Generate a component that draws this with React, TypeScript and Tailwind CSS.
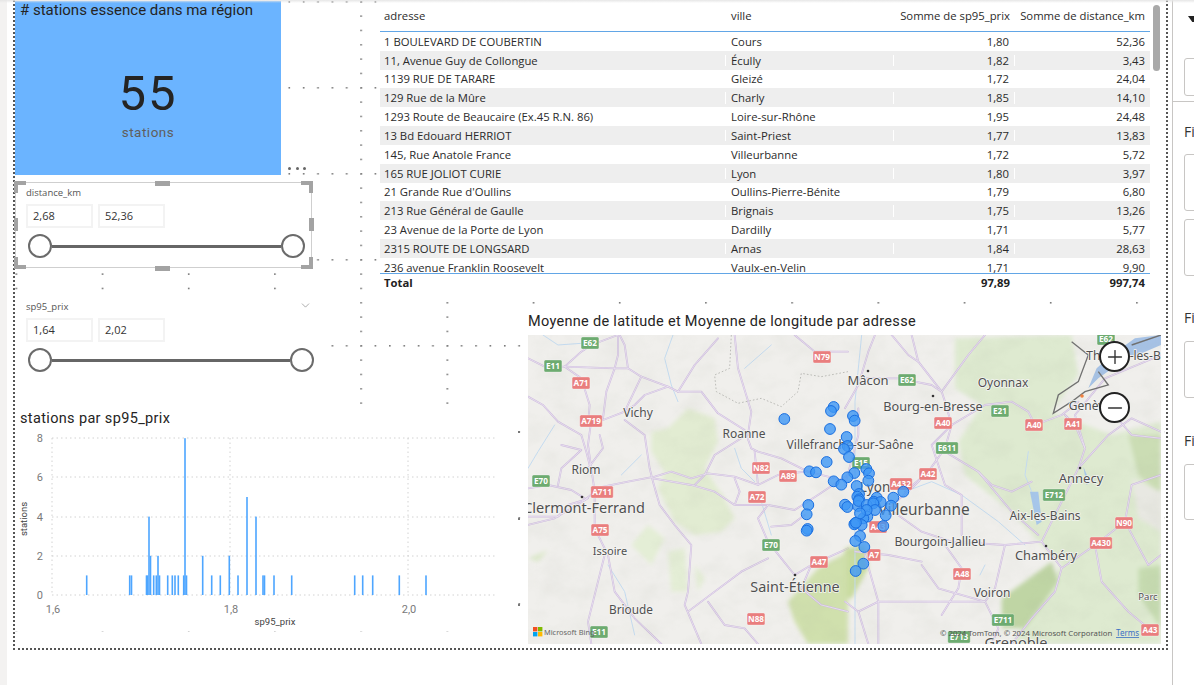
import { Plus, Minus, ChevronDown } from 'lucide-react';

const rows = [
  ['1 BOULEVARD DE COUBERTIN', 'Cours', '1,80', '52,36'],
  ['11, Avenue Guy de Collongue', 'Écully', '1,82', '3,43'],
  ['1139 RUE DE TARARE', 'Gleizé', '1,72', '24,04'],
  ['129 Rue de la Mûre', 'Charly', '1,85', '14,10'],
  ['1293 Route de Beaucaire (Ex.45 R.N. 86)', 'Loire-sur-Rhône', '1,95', '24,48'],
  ['13 Bd Edouard HERRIOT', 'Saint-Priest', '1,77', '13,83'],
  ['145, Rue Anatole France', 'Villeurbanne', '1,72', '5,72'],
  ['165 RUE JOLIOT CURIE', 'Lyon', '1,80', '3,97'],
  ["21 Grande Rue d'Oullins", 'Oullins-Pierre-Bénite', '1,79', '6,80'],
  ['213 Rue Général de Gaulle', 'Brignais', '1,75', '13,26'],
  ['23 Avenue de la Porte de Lyon', 'Dardilly', '1,71', '5,77'],
  ['2315 ROUTE DE LONGSARD', 'Arnas', '1,84', '28,63'],
  ['236 avenue Franklin Roosevelt', 'Vaulx-en-Velin', '1,71', '9,90'],
];

// [x, count], x in page pixels
const bars = [
  [86.7, 1], [129.7, 1], [131.5, 1], [146.5, 1], [147.5, 1], [149, 4], [150.5, 2], [153.7, 1], [156.3, 1], [158, 2],
  [159.5, 1], [167.7, 1], [172.3, 1], [175, 1], [178.3, 1], [183.7, 1], [185, 8], [186.5, 1], [202.7, 2], [211.7, 1],
  [220.3, 1], [229.3, 2], [238, 1], [247, 5], [256, 4], [263, 1], [264.5, 1], [274, 1], [291.7, 1], [354.7, 1],
  [362.7, 1], [372.7, 1], [399.3, 1], [426, 1],
];

const dots = [
  [73, 87], [221, 51], [213, 63], [279, 78], [284, 92], [210, 117], [260, 141], [263, 168], [252, 177], [267, 201],
  [200, 216], [148, 244], [168, 247], [283, 249], [262, 262], [221, 274], [244, 284], [319, 237], [327, 250], [325, 272],
  [290, 288], [297, 312], [292, 320], [298, 328], [294, 348], [296, 333], [255, 344], [262, 351], [350, 323], [341, 335],
  [362, 336], [400, 323], [430, 305], [393, 347], [320, 345], [340, 340], [345, 360], [377, 376], [322, 380], [310, 385],
  [305, 405], [285, 400], [283, 403], [288, 398], [370, 408], [145, 345], [140, 373], [143, 417], [140, 422], [300, 438],
  [286, 453], [313, 471], [310, 521], [287, 543], [320, 360], [300, 370],
];

// map geometry: west and east halves, traced at 3x from each half's corner
const westRoads = [
  'M0 70L50 95L110 95L260 100L300 100L340 125L420 155L450 170L520 170L570 235L650 285L670 340L690 350L760 370L840 410L960 440',
  'M110 95L160 50L190 30L270 0',
  'M270 0L270 60L260 100L235 170L225 250L190 255L180 330L190 400L200 470L200 580L240 660L260 770L320 850L400 927',
  'M300 100L290 30L275 0',
  'M110 95L160 130L185 210L180 270',
  'M0 185L45 210L90 260L160 300L175 350L185 390',
  'M200 460L300 440L380 425L430 410L490 430L540 415L620 425L690 450L750 420L830 410',
  'M0 460L60 450L130 465L170 490',
  'M0 545L90 545L120 510L170 495L200 470',
  'M225 255L290 230L340 125',
  'M290 255L350 300L365 400L375 440L395 510L440 570L490 630L480 770L470 810L520 927',
  'M375 430L490 450L560 470L620 510L720 510L800 525L870 480L960 420',
  'M720 510L690 550L720 620L760 670L800 720L850 690L960 640',
  'M640 310L560 360L530 420L500 450',
  'M660 300L670 230L630 100L620 0',
  'M450 170L500 90L570 10',
  'M420 155L350 180L320 210L290 230',
  'M730 575L790 570L830 540',
  'M720 670L640 710L560 770L480 830',
  'M540 800L590 870L650 880L690 927',
  'M620 430L635 470L620 510',
  'M180 490L130 520L80 550L0 570',
  'M680 350L690 450',
  'M850 690L820 760L880 810L960 830',
  'M800 0L860 50L960 50',
  'M230 660L180 860L190 927',
  'M100 330L160 345L100 400L90 450',
  'M215 300L225 340L180 400',
];

const westRivers = [
  'M435 0L410 70L430 150L450 200',
  'M730 30L650 100',
  'M0 400L30 350L80 270',
  'M340 360L280 420',
  'M620 340L640 400L680 440',
  'M700 500L730 600',
  'M240 690L290 770L320 900',
  'M45 0L90 30L160 25',
];

const eastRoads = [
  'M0 220L40 150L70 50L90 0',
  'M0 450L40 300L40 220',
  'M200 0L220 80L290 170L300 200L320 270L300 340L250 410L180 470',
  'M60 130L160 130L260 150L290 170L370 60L420 0',
  'M320 270L420 210L500 200L550 230L570 270L650 240L700 200',
  'M300 350L400 410L440 450L500 470L560 440',
  'M130 520L230 590L320 620L480 630L590 620',
  'M590 620L620 560L700 400L720 340L690 270L660 240',
  'M700 400L790 300L860 250L948 290',
  'M590 620L650 700L630 770L560 850L500 927',
  'M480 630L450 760L420 800L100 800L40 830',
  'M300 630L350 700L340 760L290 840',
  'M230 690L280 760L420 800L460 880L440 927',
  'M60 660L100 800L100 927',
  'M650 700L750 630L840 560L860 450L948 420',
  'M840 560L910 690L948 660',
  'M750 630L770 740L850 830L910 880',
  'M320 270L260 330L300 450L350 480L350 600',
  'M400 410L500 530L580 600',
  'M30 650L130 660L230 680',
  'M720 340L690 240L780 130L948 60',
  'M948 310L860 300L800 230',
  'M130 520L200 460L250 410',
  'M140 0L190 60L220 80',
  'M0 800L40 830L70 927',
];

const eastRivers = [
  'M50 0L30 200L30 500L30 927',
  'M180 470L260 440L350 480L460 560L540 630',
  'M550 350L540 420L560 470',
  'M420 690L405 720',
];

const labels: [string, number, number, number][] = [
  ['Mâcon', 868, 385, 13], ['Oyonnax', 1003, 387, 12], ['Bourg-en-Bresse', 933, 411, 12.7], ['Thonon-les-Bains', 1135, 360, 12],
  ['Genève', 1090, 410, 12], ['Vichy', 638, 417, 12], ['Roanne', 744, 438, 12], ['Villefranche-sur-Saône', 850, 449, 12],
  ['Riom', 586, 474, 12], ['Annecy', 1081, 483, 13], ['Clermont-Ferrand', 584, 513, 14.5], ['Lyon', 875, 492, 13.5],
  ['Villeurbanne', 924, 515, 15.4], ['Aix-les-Bains', 1045, 520, 12], ['Bourgoin-Jallieu', 940, 546, 12.2], ['Issoire', 610, 555, 11],
  ['Chambéry', 1046, 560, 12.8], ['Saint-Étienne', 795, 592, 14.4], ['Voiron', 992, 597, 12], ['Parc', 1148, 600, 9.5],
  ['Brioude', 631, 614, 11.8], ['Grenoble', 1016, 648, 14.5],
];

const redBadges: [string, number, number][] = [
  ['A71', 581, 383], ['A719', 591, 421], ['N79', 822, 357], ['A89', 788, 476], ['N82', 761, 468], ['A72', 757, 497],
  ['A711', 602, 492], ['A75', 600, 530], ['A47', 819, 562], ['A7', 874, 555], ['A40', 943, 423], ['A40', 1034, 425],
  ['A41', 1073, 424], ['A42', 928, 474], ['A432', 901, 484], ['A43', 878, 527], ['A48', 962, 574], ['N90', 1124, 523],
  ['A430', 1101, 543], ['N88', 756, 619], ['A43', 1150, 630],
];

const greenBadges: [string, number, number][] = [
  ['E62', 590, 343], ['E11', 553, 366], ['E62', 907, 380], ['E21', 1000, 411], ['E611', 947, 448], ['E70', 541, 481],
  ['E70', 771, 545], ['E712', 1054, 495], ['E711', 1003, 620], ['E11', 599, 632], ['E15', 861, 463], ['E62', 1106, 339],
  ['E713', 959, 637],
];

function Badge({ text, x, y, fill }: { text: string; x: number; y: number; fill: string }) {
  const w = text.length * 4.6 + 4;
  return (
    <g>
      <rect x={x - w / 2} y={y - 6} width={w} height="12" rx="1.5" fill={fill} stroke="#fff" strokeOpacity="0.5" strokeWidth="0.6" />
      <text x={x} y={y + 3} fontSize="8.2" fontWeight="700" textAnchor="middle" className="fill-white font-['Noto_Sans',sans-serif]">
        {text}
      </text>
    </g>
  );
}

function RoadSet({ roads, rivers }: { roads: string[]; rivers: string[] }) {
  return (
    <g fill="none" strokeLinejoin="round" strokeLinecap="round">
      {rivers.map((d) => (
        <path key={d} d={d} stroke="#c4dbf0" strokeWidth="3" />
      ))}
      {roads.map((d) => (
        <path key={d} d={d} stroke="#cdbade" strokeWidth="5.5" />
      ))}
      {roads.map((d) => (
        <path key={d + 'i'} d={d} stroke="#f3eef6" strokeWidth="2" />
      ))}
    </g>
  );
}

function MapDrawing() {
  return (
    <svg viewBox="528 335 633 309" className="block h-full w-full">
      <defs>
        <filter id="soft" x="-5%" y="-5%" width="110%" height="110%">
          <feGaussianBlur stdDeviation="6" />
        </filter>
        <filter id="relief" x="0" y="0" width="100%" height="100%">
          <feTurbulence type="fractalNoise" baseFrequency="0.035 0.05" numOctaves="4" seed="4" />
          <feColorMatrix values="0 0 0 0 0.35  0 0 0 0 0.38  0 0 0 0 0.3  1.6 0 0 0 -0.62" />
        </filter>
      </defs>
      <rect x="528" y="335" width="633" height="309" fill="#f0efec" />

      <g transform="translate(528 335) scale(0.3333)">
        <g filter="url(#soft)">
          <path d="M370 290L420 280L480 220L560 250L570 320L530 400L590 490L620 550L580 590L500 600L440 560L390 460L410 410L370 350Z" fill="#e2ecd2" />
          <path d="M310 630L360 570L410 610L370 690Z" fill="#e4eed6" />
          <path d="M420 650L470 640L480 770L430 770Z" fill="#e4eed6" />
          <path d="M500 690L530 730L510 770Z" fill="#e4eed6" />
          <path d="M0 670L60 645L30 680Z" fill="#dce8ca" />
          <path d="M780 800L870 700L960 650L960 927L840 927L800 860Z" fill="#d0e0ad" />
        </g>
        <RoadSet roads={westRoads} rivers={westRivers} />
        <path
          d="M610 0L605 100L560 120L565 170L630 205L700 190L760 215L810 170L820 115L880 125L960 110"
          fill="none"
          stroke="#bcbcb8"
          strokeWidth="3"
          strokeDasharray="5 6"
        />
      </g>

      <g transform="translate(845 335) scale(0.3333)">
        <g filter="url(#soft)">
          <path d="M330 10L680 0L700 120L620 230L800 300L948 260L948 927L500 927L650 690L580 620L500 530L360 420L340 320L410 210L330 160Z" fill="#deead0" />
          <path d="M470 790L620 680L640 740L540 880L470 880Z" fill="#bfd5a4" />
          <path d="M850 300L948 300L948 480L880 420Z" fill="#cbddb4" />
          <path d="M880 700L948 690L948 880L880 780Z" fill="#c6dbb0" />
          <path d="M860 430L948 470L948 590L880 550Z" fill="#e8e8e2" />
          <path d="M0 640L60 630L70 700L20 790L0 790Z" fill="#c9dca0" />
        </g>
        <path d="M948 0L870 10L800 60L755 100L730 160L760 130L830 80L948 30Z" fill="#a6c2e6" />
        <path d="M555 470L580 470L590 560L575 570Z" fill="#a6c6ea" />
        <path d="M715 395L735 440L725 450Z" fill="#a6c6ea" />
        <RoadSet roads={eastRoads} rivers={eastRivers} />
        <path
          d="M680 20L730 60L700 140L640 180L625 235L680 200L720 170L790 150L760 110M860 30L948 0"
          fill="none"
          stroke="#707070"
          strokeWidth="4"
        />
      </g>

      <rect x="528" y="335" width="633" height="309" filter="url(#relief)" opacity="0.1" />

      <g className="fill-[#333]">
        <circle cx="582" cy="497" r="1.3" />
        <circle cx="868" cy="371" r="1.3" />
        <circle cx="933" cy="396" r="1.3" />
        <circle cx="1080" cy="468" r="1.3" />
        <circle cx="1046" cy="546" r="1.3" />
        <circle cx="795" cy="575" r="1.3" />
      </g>
      <circle cx="1082" cy="396" r="1.8" fill="#f08040" />

      {labels.map(([text, x, y, size]) => (
        <text
          key={text}
          x={x}
          y={y}
          fontSize={size}
          textAnchor="middle"
          className="fill-[#505050] stroke-[#f4f4f2] stroke-[1.5px] font-['Noto_Sans',sans-serif] [paint-order:stroke]"
        >
          {text}
        </text>
      ))}
      {redBadges.map(([text, x, y]) => (
        <Badge key={`${text}${x}`} text={text} x={x} y={y} fill="#e97e7e" />
      ))}
      {greenBadges.map(([text, x, y]) => (
        <Badge key={`${text}${x}`} text={text} x={x} y={y} fill="#6dab70" />
      ))}
      {dots.map(([x, y], i) => (
        <circle key={i} cx={760 + x / 3} cy={390 + y / 3} r="5.4" fill="#3f97f5" fillOpacity="0.8" stroke="#1a6fe0" strokeWidth="1" />
      ))}
      <g>
        <rect x="533" y="627" width="4.4" height="4.4" fill="#f25022" />
        <rect x="538" y="627" width="4.4" height="4.4" fill="#7fba00" />
        <rect x="533" y="632" width="4.4" height="4.4" fill="#00a4ef" />
        <rect x="538" y="632" width="4.4" height="4.4" fill="#ffb900" />
        <text x="544" y="635" fontSize="7.4" className="fill-[#666] font-['Noto_Sans',sans-serif]">
          Microsoft Bing
        </text>
        <text x="940" y="636" fontSize="7.75" className="fill-[#555] font-['Noto_Sans',sans-serif]">
          © 2024 TomTom, © 2024 Microsoft Corporation
        </text>
        <text x="1116" y="636" fontSize="8" className="fill-[#3a6fc4] font-['Noto_Sans',sans-serif] underline">
          Terms
        </text>
      </g>
    </svg>
  );
}

function HistoChart() {
  const yTicks = [
    [8, 438],
    [6, 477],
    [4, 517],
    [2, 556],
    [0, 595],
  ];
  const xTicks = [
    ['1,6', 52],
    ['1,8', 230],
    ['2,0', 408],
  ] as const;
  return (
    <svg viewBox="15 428 503 200" className="block h-[200px] w-[503px] font-['Roboto',sans-serif]">
      {yTicks.map(([v, y]) => (
        <g key={v}>
          <line x1="52" x2="497" y1={y} y2={y} stroke="#d2d2d2" strokeDasharray="1.5 3" />
          <text x="43" y={y + 4} fontSize="11" textAnchor="end" fill="#7a7a7a">
            {v}
          </text>
        </g>
      ))}
      {xTicks.map(([v, x]) => (
        <g key={v}>
          <line x1={x} x2={x} y1="438" y2="595" stroke="#d2d2d2" strokeDasharray="1.5 3" />
          <text x={x + 1} y="613" fontSize="11" textAnchor="middle" fill="#7a7a7a">
            {v}
          </text>
        </g>
      ))}
      {bars.map(([x, n]) => (
        <rect key={x} x={x - 0.8} y={595 - n * 19.6} width="1.6" height={n * 19.6} fill="#4ea6ff" />
      ))}
      <text x="275" y="625" fontSize="9.5" textAnchor="middle" fill="#444">
        sp95_prix
      </text>
      <text x="0" y="0" fontSize="9.5" textAnchor="middle" fill="#444" transform="translate(27 519) rotate(-90)">
        stations
      </text>
    </svg>
  );
}

function RangeSlider({ label, min, max, barWidth }: { label: string; min: string; max: string; barWidth: string }) {
  return (
    <div className="pl-[11px] font-['Open_Sans',sans-serif]">
      <div className="h-[22px] text-[9.5px] leading-[22px] text-[#555]">{label}</div>
      <div className="flex gap-[5px] text-[11px] text-[#333]">
        <div className="h-[24px] w-[67px] border-2 border-[#f3f3f3] pl-[5px] leading-[20px]">{min}</div>
        <div className="h-[24px] w-[67px] border-2 border-[#f3f3f3] pl-[5px] leading-[20px]">{max}</div>
      </div>
      <div className={`mt-[6px] flex items-center pl-[2px] ${barWidth}`}>
        <span className="size-[24px] shrink-0 rounded-full border-2 border-[#6b6b6b] bg-white" />
        <span className="h-[3px] grow bg-[#666]" />
        <span className="size-[24px] shrink-0 rounded-full border-2 border-[#6b6b6b] bg-white" />
      </div>
    </div>
  );
}

function SelectionHandles() {
  return (
    <>
      <span className="absolute left-[-2px] top-[-2px] h-[4px] w-[12px] bg-[#a3a3a3]" />
      <span className="absolute left-[-2px] top-[-2px] h-[12px] w-[4px] bg-[#a3a3a3]" />
      <span className="absolute right-[-2px] top-[-2px] h-[4px] w-[12px] bg-[#a3a3a3]" />
      <span className="absolute right-[-2px] top-[-2px] h-[12px] w-[4px] bg-[#a3a3a3]" />
      <span className="absolute bottom-[-2px] left-[-2px] h-[4px] w-[12px] bg-[#a3a3a3]" />
      <span className="absolute bottom-[-2px] left-[-2px] h-[12px] w-[4px] bg-[#a3a3a3]" />
      <span className="absolute bottom-[-2px] right-[-2px] h-[4px] w-[12px] bg-[#a3a3a3]" />
      <span className="absolute bottom-[-2px] right-[-2px] h-[12px] w-[4px] bg-[#a3a3a3]" />
      <span className="absolute left-[139px] top-[-2px] h-[5px] w-[15px] bg-[#a3a3a3]" />
      <span className="absolute bottom-[-4px] left-[139px] h-[5px] w-[15px] bg-[#a3a3a3]" />
      <span className="absolute left-[-2px] top-[35px] h-[13px] w-[4px] bg-[#a3a3a3]" />
      <span className="absolute right-[-3px] top-[35px] h-[13px] w-[5px] bg-[#a3a3a3]" />
    </>
  );
}

function DataTable() {
  return (
    <div className="relative h-[295px] w-[788px] bg-white pl-[2px] font-['Open_Sans',sans-serif] text-[11.3px] text-[#2b2b2b]">
      <div className="w-[770px]">
        <div className="grid h-[32px] grid-cols-[346px_168px_121px_135px] items-center border-b border-[#62a6e6] pt-px">
          <div className="pl-[4px]">adresse</div>
          <div className="pl-[5px]">ville</div>
          <div className="pr-[5px] text-right">Somme de sp95_prix</div>
          <div className="pr-[5px] text-right">Somme de distance_km</div>
        </div>
        <div className="h-[241px] overflow-hidden">
          {rows.map((r, i) => (
            <div
              key={r[0]}
              className={`grid h-[18.83px] grid-cols-[346px_168px_121px_135px] items-center leading-none ${i % 2 === 1 ? 'bg-[#eeeeee]' : 'bg-white'}`}
            >
              <div className="border-r border-white pl-[4px]">{r[0]}</div>
              <div className="border-r border-white pl-[5px]">{r[1]}</div>
              <div className="border-r border-white pr-[5px] text-right">{r[2]}</div>
              <div className="pr-[5px] text-right">{r[3]}</div>
            </div>
          ))}
        </div>
        <div className="grid h-[20px] grid-cols-[346px_168px_121px_135px] items-center border-t border-[#62a6e6] font-bold text-[#222]">
          <div className="pl-[4px]">Total</div>
          <div />
          <div className="pr-[5px] text-right">97,89</div>
          <div className="pr-[5px] text-right">997,74</div>
        </div>
      </div>
      <span className="absolute left-[775px] top-[5px] h-[66px] w-[7px] rounded-full bg-[#a9a9a9]" />
    </div>
  );
}

function FilterPane() {
  return (
    <aside className="flex h-full w-[22px] shrink-0 flex-col overflow-hidden border-l border-[#c8c6c4] bg-white pt-[16px] font-['Open_Sans',sans-serif] text-[14px] text-[#333]">
      <svg viewBox="0 0 14 8" className="ml-[15px] h-[7px] w-[12px] shrink-0">
        <path d="M0 0H14L8 7H5Z" fill="#222" />
      </svg>
      <div className="ml-[11px] mt-[35px] h-[38px] w-[40px] shrink-0 rounded-[3px] border border-[#c8c6c4]" />
      <div className="mt-[5px] h-px w-full shrink-0 bg-[#c8c6c4]" />
      <div className="ml-[11px] mt-[20px] h-[20px] w-[60px] shrink-0 leading-[20px]">Filtres</div>
      <div className="ml-[11px] mt-[12px] h-[57px] w-[40px] shrink-0 rounded-[3px] border border-[#c8c6c4]" />
      <div className="ml-[11px] mt-[8px] h-[57px] w-[40px] shrink-0 rounded-[3px] border border-[#c8c6c4]" />
      <div className="ml-[11px] mt-[32px] h-[20px] w-[60px] shrink-0 leading-[20px]">Filtres</div>
      <div className="ml-[11px] mt-[13px] h-[57px] w-[40px] shrink-0 rounded-[3px] border border-[#c8c6c4]" />
      <div className="ml-[11px] mt-[33px] h-[20px] w-[60px] shrink-0 leading-[20px]">Filtres</div>
      <div className="ml-[11px] mt-[13px] h-[56px] w-[40px] shrink-0 rounded-[3px] border border-[#c8c6c4]" />
    </aside>
  );
}

export default function App() {
  return (
    <div className="relative flex h-[685px] w-[1194px] overflow-hidden bg-white">
      <div className="w-[7px] shrink-0 bg-[#f3f2f1]" />
      <main className="w-[1165px] shrink-0 pl-[6px]">
        <div className="relative h-[650px] w-[1155px] border-x-2 border-b-2 border-dotted border-[#555]">
          {/* canvas grid, only seen where no visual covers it */}
          <svg className="absolute left-0 top-0 h-[632px] w-[1150px]">
            <defs>
              <pattern id="grid" x="0.5" y="1" width="86.2" height="86" patternUnits="userSpaceOnUse">
                {[0, 1, 2, 3, 4, 5].map((k) => (
                  <g key={k} fill="#777">
                    <rect x={k * 14.37} y="0" width="1.6" height="1.6" />
                    <rect x="0" y={k * 14.33} width="1.6" height="1.6" />
                  </g>
                ))}
              </pattern>
            </defs>
            <rect width="1150" height="632" fill="url(#grid)" />
            <rect x="503" y="431" width="2" height="2" fill="#777" />
            <rect x="503" y="518" width="2" height="2" fill="#777" />
            <rect x="503" y="604" width="2" height="2" fill="#777" />
          </svg>

          <div className="relative flex h-[295px]">
            <div className="w-[363px] shrink-0">
              <section className="relative mt-px h-[174px] w-[266px] bg-[#6bb4ff]">
                <h2 className="pl-[5px] font-['Roboto',sans-serif] text-[15px] leading-[18px] text-[#252423]">
                  # stations essence dans ma région
                </h2>
                <div className="mt-[50px] text-center font-['Roboto',sans-serif] text-[49px] leading-[50px] tracking-[2px] text-[#252423]">
                  55
                </div>
                <div className="mt-[4px] text-center font-['Roboto',sans-serif] text-[13.5px] leading-[18px] tracking-[0.5px] text-[#605e5c]">
                  stations
                </div>
                <span className="absolute left-[273px] top-[164px] flex h-[6px] w-[18px] items-center justify-between bg-white">
                  <i className="size-[3px] rounded-full bg-[#666]" />
                  <i className="size-[3px] rounded-full bg-[#666]" />
                  <i className="size-[3px] rounded-full bg-[#666]" />
                </span>
              </section>
              <section className="relative mt-[7px] h-[86px] w-[297px] border border-[#cfcfcf] bg-white">
                <div className="-ml-px -mt-px">
                  <RangeSlider label="distance_km" min="2,68" max="52,36" barWidth="w-[279px]" />
                </div>
                <SelectionHandles />
              </section>
            </div>
            <DataTable />
          </div>

          <div className="relative flex h-[353px]">
            <div className="w-[513px] shrink-0">
              <section className="relative h-[110px] w-[312px] bg-white">
                <div className="pt-px">
                  <RangeSlider label="sp95_prix" min="1,64" max="2,02" barWidth="w-[288px]" />
                </div>
                <ChevronDown size={13} strokeWidth={1} className="absolute left-[284px] top-[4px] text-[#666]" />
              </section>
              <section className="mt-[3px] h-[220px] w-[503px] bg-white">
                <h2 className="h-[20px] pl-[5px] pt-px font-['Roboto',sans-serif] text-[14.5px] leading-[20px] tracking-[0.35px] text-[#252423]">
                  stations par sp95_prix
                </h2>
                <HistoChart />
              </section>
            </div>
            <section className="relative mt-[15px] w-[633px] shrink-0 bg-white">
              <h2 className="h-[25px] font-['Roboto',sans-serif] text-[14.5px] leading-[24px] tracking-[0.3px] text-[#252423]">
                Moyenne de latitude et Moyenne de longitude par adresse
              </h2>
              <div className="h-[309px] w-[633px]">
                <MapDrawing />
              </div>
              <button className="absolute left-[571px] top-[31px] flex size-[31px] items-center justify-center rounded-full border-2 border-[#222] bg-white text-[#333]">
                <Plus size={22} strokeWidth={1.5} />
              </button>
              <button className="absolute left-[571px] top-[82px] flex size-[31px] items-center justify-center rounded-full border-2 border-[#222] bg-white text-[#333]">
                <Minus size={22} strokeWidth={1.5} />
              </button>
            </section>
          </div>
        </div>
      </main>
      <FilterPane />
      <div className="pointer-events-none absolute inset-x-0 top-0 h-[3px] bg-gradient-to-b from-[#e6e6e6] to-transparent" />
    </div>
  );
}
